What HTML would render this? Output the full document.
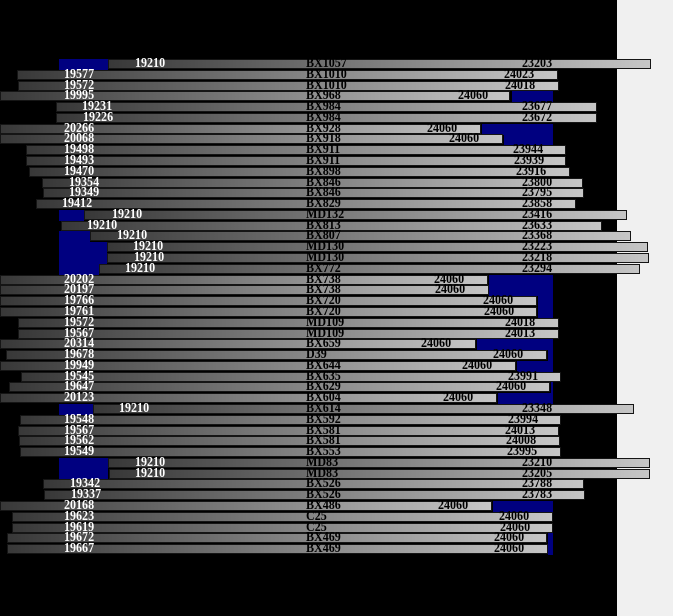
<!DOCTYPE html>
<html><head><meta charset="utf-8"><style>
html,body{margin:0;padding:0}
body{width:673px;height:616px;position:relative;overflow:hidden;background:#000;font-family:"Liberation Serif",serif;font-weight:bold;font-size:14px}
#gp{position:absolute;left:617px;top:0;width:56px;height:616px;background:#f0f0f0}
.b{position:absolute;height:10px;box-sizing:border-box;border:1px solid #151515;background:linear-gradient(to right,#383838,#c6c6c6)}
.u{position:absolute;height:11px;background:#000080}
.t{position:absolute;line-height:11px;white-space:nowrap;transform:scaleX(0.86);transform-origin:0 0}
.w{color:#fff}.k{color:#000}
</style></head><body>
<div id="gp"></div>
<div id="c"></div>
<script>
var R=[
[108,651,"19210",135,"BX1057","23203",522,59,108],
[17,558,"19577",64,"BX1010","24023",504],
[18,559,"19572",64,"BX1010","24018",505],
[0,510,"19995",64,"BX968","24060",458,512,553],
[56,597,"19231",82,"BX984","23677",522],
[56,597,"19226",83,"BX984","23672",522],
[0,481,"20266",64,"BX928","24060",427,482,553],
[0,503,"20068",64,"BX918","24060",449,504,553],
[26,566,"19498",64,"BX911","23944",513],
[26,566,"19493",64,"BX911","23939",514],
[29,570,"19470",64,"BX898","23916",516],
[42,583,"19354",69,"BX846","23800",522],
[43,584,"19349",69,"BX846","23795",522],
[36,576,"19412",62,"BX829","23858",522],
[84,627,"19210",112,"MD132","23416",522,59,84],
[61,602,"19210",87,"BX813","23633",522],
[90,631,"19210",117,"BX807","23368",522,59,90],
[107,648,"19210",133,"MD130","23223",522,59,107],
[107,649,"19210",134,"MD130","23218",522,59,107],
[99,640,"19210",125,"BX772","23294",522,59,99],
[0,488,"20202",64,"BX738","24060",434,489,553],
[0,489,"20197",64,"BX738","24060",435,489,553],
[0,537,"19766",64,"BX720","24060",483,538,553],
[0,537,"19761",64,"BX720","24060",484,538,553],
[18,559,"19572",64,"MD109","24018",505],
[18,559,"19567",64,"MD109","24013",505],
[0,476,"20314",64,"BX659","24060",421,477,553],
[6,547,"19678",64,"D39","24060",493,548,553],
[0,516,"19949",64,"BX644","24060",462,517,553],
[21,561,"19545",64,"BX635","23991",508],
[9,550,"19647",64,"BX629","24060",496,551,553],
[0,497,"20123",64,"BX604","24060",443,498,553],
[93,634,"19210",119,"BX614","23348",522,59,93],
[20,561,"19548",64,"BX592","23994",508],
[18,559,"19567",64,"BX581","24013",505],
[19,560,"19562",64,"BX581","24008",506],
[20,561,"19549",64,"BX553","23995",507],
[108,650,"19210",135,"MD83","23210",522,59,108],
[109,650,"19210",135,"MD83","23205",522,59,108],
[43,584,"19342",70,"BX526","23788",522],
[44,585,"19337",71,"BX526","23783",522],
[0,492,"20168",64,"BX486","24060",438,493,553],
[12,553,"19623",64,"C25","24060",499],
[12,553,"19619",64,"C25","24060",500],
[7,547,"19672",64,"BX469","24060",494,548,553],
[7,548,"19667",64,"BX469","24060",494,548,553]
];
var h="";
R.forEach(function(r,i){var y=Math.round(59+i*10.78);
if(r.length>7)h+='<div class="u" style="left:'+r[7]+'px;top:'+y+'px;width:'+(r[8]-r[7])+'px"></div>';
h+='<div class="b" style="left:'+r[0]+'px;top:'+y+'px;width:'+(r[1]-r[0])+'px"></div>';});
R.forEach(function(r,i){var y=Math.round(59+i*10.78)-1;
h+='<div class="t w" style="left:'+r[3]+'px;top:'+y+'px">'+r[2]+'</div>';
h+='<div class="t k" style="left:306px;top:'+y+'px">'+r[4]+'</div>';
h+='<div class="t k" style="left:'+r[6]+'px;top:'+y+'px">'+r[5]+'</div>';});
document.getElementById("c").innerHTML=h;
</script>
</body></html>
